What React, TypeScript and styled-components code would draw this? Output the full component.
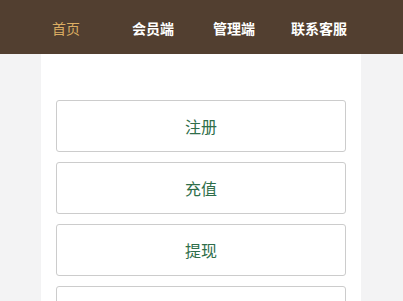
import React from "react";
import styled, { createGlobalStyle } from "styled-components";

const Global = createGlobalStyle`
  html, body { margin: 0; padding: 0; background: #f3f3f4; }
  body { font-family: "Microsoft YaHei", "Noto Sans CJK SC", "Liberation Sans", sans-serif; }
`;

const Header = styled.header`
  height: 54px;
  background: #523f30;
  display: flex;
  align-items: center;
  padding-left: 52px;
`;

const NavItem = styled.a<{ $active?: boolean; $gap: number }>`
  margin-left: ${(p) => p.$gap}px;
  font-size: 14px;
  font-weight: ${(p) => (p.$active ? 400 : 700)};
  color: ${(p) => (p.$active ? "#dcae63" : "#ffffff")};
  text-decoration: none;
  line-height: 20px;
  padding-top: 2px;
`;

const Main = styled.main`
  width: 320px;
  margin-left: 41px;
  background: #ffffff;
  padding: 46px 15px 0;
  box-sizing: border-box;
  min-height: 247px;
  display: flex;
  flex-direction: column;
  gap: 10px;
`;

const MenuButton = styled.a`
  height: 52px;
  box-sizing: border-box;
  border: 1px solid #cccccc;
  border-radius: 3px;
  display: flex;
  align-items: center;
  justify-content: center;
  font-size: 16px;
  color: #2f6e4a;
  text-decoration: none;
  background: #ffffff;
`;

const navs = [
  { label: "首页", active: true, gap: 0 },
  { label: "会员端", gap: 52 },
  { label: "管理端", gap: 39 },
  { label: "联系客服", gap: 36 },
];

const items = ["注册", "充值", "提现", ""];

export default function App() {
  return (
    <>
      <Global />
      <Header>
        {navs.map((n) => (
          <NavItem key={n.label} $active={n.active} $gap={n.gap} href="#">
            {n.label}
          </NavItem>
        ))}
      </Header>
      <Main>
        {items.map((t, i) => (
          <MenuButton key={i} href="#">
            {t}
          </MenuButton>
        ))}
      </Main>
    </>
  );
}
